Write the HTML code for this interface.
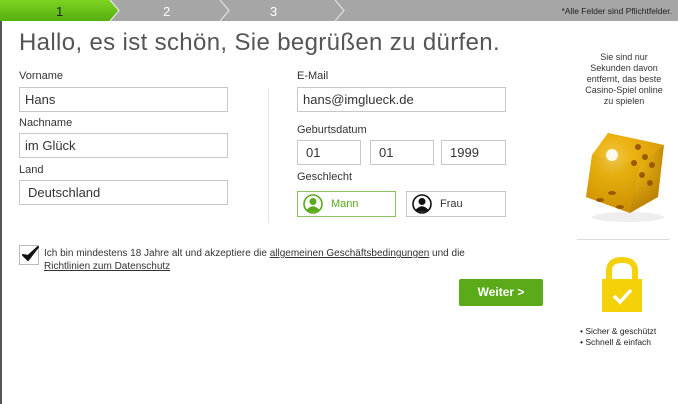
<!DOCTYPE html>
<html><head><meta charset="utf-8"><style>
*{margin:0;padding:0;box-sizing:border-box}
body{width:678px;height:404px;background:#fff;font-family:"Liberation Sans",sans-serif;color:#333;position:relative;overflow:hidden}
.a{position:absolute}
.lbl{font-size:11px;color:#333}
.in{position:absolute;border:1px solid #c8c8c8;background:#fff;font-size:13px;color:#333;padding:4px 0 0 5px}
.side{font-size:9px;color:#333;text-align:center;line-height:11px}
</style></head><body>
<div class="a" style="left:0;top:0;width:1.5px;height:404px;background:#555"></div>
<svg class="a" style="left:0;top:0" width="678" height="22">
<defs><linearGradient id="g" x1="0" y1="0" x2="0" y2="1"><stop offset="0" stop-color="#7ed321"/><stop offset="1" stop-color="#54b00f"/></linearGradient></defs>
<rect width="678" height="21" fill="#a6a6a6"/>
<polygon points="0,0 110,0 119,10.5 110,21 0,21" fill="url(#g)"/>
<polyline points="110,0 119,10.5 110,21" fill="none" stroke="#e8e8e8" stroke-width="1.2"/>
<polyline points="220,0 229,10.5 220,21" fill="none" stroke="#e0e0e0" stroke-width="1.2"/>
<polyline points="335,0 344,10.5 335,21" fill="none" stroke="#e0e0e0" stroke-width="1.2"/>
<text x="56" y="16" font-size="13" fill="#222" font-family="Liberation Sans">1</text>
<text x="163" y="16" font-size="13" fill="#fff" font-family="Liberation Sans">2</text>
<text x="270" y="16" font-size="13" fill="#fff" font-family="Liberation Sans">3</text>
<text x="672" y="14" font-size="8.5" fill="#222" text-anchor="end" font-family="Liberation Sans">*Alle Felder sind Pflichtfelder.</text>
</svg>
<div class="a" style="left:19px;top:29px;font-size:24px;color:#555;letter-spacing:0.35px">Hallo, es ist schön, Sie begrüßen zu dürfen.</div>

<div class="a lbl" style="left:19px;top:70px">Vorname</div>
<div class="in" style="left:19px;top:87px;width:209px;height:25px">Hans</div>
<div class="a lbl" style="left:19px;top:117px">Nachname</div>
<div class="in" style="left:19px;top:133px;width:209px;height:25px">im Glück</div>
<div class="a lbl" style="left:19px;top:164px">Land</div>
<div class="in" style="left:19px;top:180px;width:209px;height:25px;padding-left:8px">Deutschland</div>

<div class="a" style="left:268px;top:88px;width:1px;height:135px;background:#e4e4e4"></div>

<div class="a lbl" style="left:297px;top:70px">E-Mail</div>
<div class="in" style="left:297px;top:87px;width:209px;height:25px">hans@imglueck.de</div>
<div class="a lbl" style="left:297px;top:124px">Geburtsdatum</div>
<div class="in" style="left:297px;top:140px;width:64px;height:25px;padding-left:8px">01</div>
<div class="in" style="left:370px;top:140px;width:64px;height:25px;padding-left:8px">01</div>
<div class="in" style="left:441px;top:140px;width:65px;height:25px;padding-left:8px">1999</div>
<div class="a lbl" style="left:297px;top:171px">Geschlecht</div>
<div class="a" style="left:297px;top:191px;width:99px;height:26px;border:1px solid #8cc45a"></div>
<svg class="a" style="left:303px;top:194px" width="20" height="20"><circle cx="10" cy="10" r="9" fill="#fff" stroke="#5aaa1a" stroke-width="1.6"/><circle cx="10" cy="7.5" r="3.5" fill="#5aaa1a"/><path d="M3.5 16 Q10 8.5 16.5 16 Q10 20 3.5 16Z" fill="#5aaa1a"/></svg>
<div class="a" style="left:331px;top:198px;font-size:11px;color:#5aaa1a">Mann</div>
<div class="a" style="left:406px;top:191px;width:100px;height:26px;border:1px solid #c8c8c8"></div>
<svg class="a" style="left:412px;top:194px" width="20" height="20"><circle cx="10" cy="10" r="9" fill="#fff" stroke="#111" stroke-width="1.6"/><circle cx="10" cy="7.5" r="3.5" fill="#111"/><path d="M3.5 16 Q10 8.5 16.5 16 Q10 20 3.5 16Z" fill="#111"/></svg>
<div class="a" style="left:440px;top:198px;font-size:11px;color:#333">Frau</div>

<div class="a" style="left:19px;top:245px;width:20px;height:20px;border:1px solid #bbb;background:#fff"></div>
<svg class="a" style="left:20px;top:244px" width="20" height="20"><path d="M3 11 L8 16 L18 3 L8 12 Z" fill="#111" stroke="#111" stroke-width="2" stroke-linejoin="round"/></svg>
<div class="a" style="left:44px;top:247px;font-size:10px;line-height:13px;color:#333">Ich bin mindestens 18 Jahre alt und akzeptiere die <u>allgemeinen Geschäftsbedingungen</u> und die<br><u>Richtlinien zum Datenschutz</u></div>
<div class="a" style="left:459px;top:279px;width:84px;height:27px;background:#5aaa1a;border-radius:2px;color:#fff;font-weight:bold;font-size:12px;text-align:center;line-height:27px">Weiter &gt;</div>

<div class="a side" style="left:576px;top:52px;width:96px">Sie sind nur<br>Sekunden davon<br>entfernt, das beste<br>Casino-Spiel online<br>zu spielen</div>
<svg class="a" style="left:578px;top:125px" width="94" height="100">
<defs><radialGradient id="d" cx="0.35" cy="0.3" r="0.8"><stop offset="0" stop-color="#fff3a0"/><stop offset="0.3" stop-color="#f2c21a"/><stop offset="1" stop-color="#b47800"/></radialGradient></defs>
<ellipse cx="50" cy="92" rx="36" ry="5" fill="#eee"/>
<polygon points="30,8 86,20 80,72 52,88 8,72 14,30" fill="url(#d)"/>
<polygon points="14,30 30,8 86,20 62,40" fill="#e8a90c" opacity="0.6"/>
<polygon points="8,72 52,88 62,40 14,30" fill="#d99a00" opacity="0.5"/>
<g fill="#9a5a00"><circle cx="60" cy="22" r="3"/><circle cx="67" cy="32" r="3"/><circle cx="74" cy="40" r="3"/><circle cx="56" cy="38" r="3"/><circle cx="64" cy="50" r="3"/><circle cx="72" cy="58" r="3"/><ellipse cx="22" cy="75" rx="4" ry="2"/><ellipse cx="42" cy="82" rx="4" ry="2"/><ellipse cx="34" cy="68" rx="4" ry="2"/></g>
<circle cx="34" cy="30" r="6" fill="#fff" opacity="0.9"/>
</svg>
<div class="a" style="left:577px;top:239px;width:93px;height:1px;background:#ddd"></div>
<svg class="a" style="left:600px;top:256px" width="44" height="58"><path d="M9 24 V15 Q9 4 22 4 Q35 4 35 15 V24" fill="none" stroke="#f5d10a" stroke-width="6"/><rect x="2" y="23" width="40" height="33" fill="#f5d10a"/><path d="M14 40 L20 46 L31 34" fill="none" stroke="#fff" stroke-width="3.5"/></svg>
<div class="a" style="left:580px;top:326px;font-size:8.5px;line-height:11px;color:#222">• Sicher &amp; geschützt<br>• Schnell &amp; einfach</div>
</body></html>
